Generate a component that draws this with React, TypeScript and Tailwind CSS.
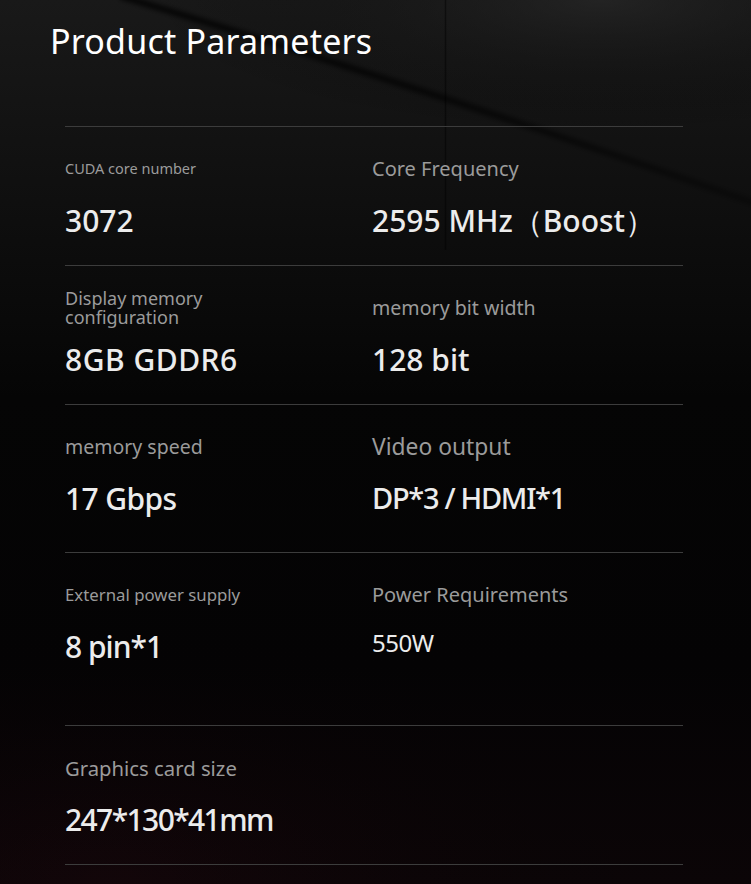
import React from "react";

type Cell = { label: string; value: string; labelCls: string; valueCls: string };

const rows: { h: string; cells: Cell[] }[] = [
  {
    h: "h-[139px]",
    cells: [
      { label: "CUDA core number", value: "3072", labelCls: "text-[14.5px]", valueCls: "text-[30px]" },
      { label: "Core Frequency", value: "2595 MHz（Boost）", labelCls: "text-[20px]", valueCls: "text-[30px]" },
    ],
  },
  {
    h: "h-[139px]",
    cells: [
      { label: "Display memory configuration", value: "8GB GDDR6", labelCls: "text-[18px] leading-[19px] w-[160px]", valueCls: "text-[30px] tracking-[0.5px]" },
      { label: "memory bit width", value: "128 bit", labelCls: "text-[19.6px]", valueCls: "text-[30px]" },
    ],
  },
  {
    h: "h-[148px]",
    cells: [
      { label: "memory speed", value: "17 Gbps", labelCls: "text-[19.5px]", valueCls: "text-[30px] tracking-[-0.6px]" },
      { label: "Video output", value: "DP*3 / HDMI*1", labelCls: "text-[22.8px]", valueCls: "text-[29px] tracking-[-1.3px]" },
    ],
  },
  {
    h: "h-[173px]",
    cells: [
      { label: "External power supply", value: "8 pin*1", labelCls: "text-[16.8px]", valueCls: "text-[30px] tracking-[-1px]" },
      { label: "Power Requirements", value: "550W", labelCls: "text-[20px]", valueCls: "text-[24px] font-normal tracking-[-0.5px] -mt-[6px]" },
    ],
  },
  {
    h: "h-[139px]",
    cells: [
      { label: "Graphics card size", value: "247*130*41mm", labelCls: "text-[20.3px]", valueCls: "text-[30px] tracking-[-1.6px]" },
    ],
  },
];

export default function App() {
  return (
    <div
      className="relative w-[751px] h-[884px] overflow-hidden bg-[linear-gradient(180deg,#191919_0%,#0e0e0e_25%,#050505_45%,#040304_75%,#0b0507_100%)]"
      style={{ fontFamily: '"Noto Sans", "Open Sans", sans-serif' }}
    >
      <svg className="absolute inset-0 pointer-events-none" width="751" height="884" viewBox="0 0 751 884">
        <defs>
          <radialGradient id="glow" cx="0.8" cy="0" r="0.6">
            <stop offset="0" stopColor="#2a2a2a" stopOpacity="0.6" />
            <stop offset="1" stopColor="#000" stopOpacity="0" />
          </radialGradient>
          <linearGradient id="streakFade" x1="0" y1="0" x2="1" y2="0">
            <stop offset="0" stopColor="#000" stopOpacity="0.85" />
            <stop offset="0.5" stopColor="#000" stopOpacity="0.7" />
            <stop offset="1" stopColor="#000" stopOpacity="0.35" />
          </linearGradient>
          <filter id="blur" x="-10%" y="-50%" width="120%" height="200%">
            <feGaussianBlur stdDeviation="2.5" />
          </filter>
          <radialGradient id="red" cx="0.15" cy="1" r="0.8">
            <stop offset="0" stopColor="#24080f" stopOpacity="0.3" />
            <stop offset="1" stopColor="#000" stopOpacity="0" />
          </radialGradient>
        </defs>
        <rect x="0" y="0" width="751" height="220" fill="url(#glow)" />
        <rect x="0" y="520" width="751" height="364" fill="url(#red)" />
        <path
          d="M120 -4 Q 400 80 760 205"
          fill="none"
          stroke="url(#streakFade)"
          strokeWidth="6"
          filter="url(#blur)"
        />
        <line x1="445.5" y1="0" x2="445.5" y2="250" stroke="#000" strokeOpacity="0.45" strokeWidth="1.5" />
      </svg>

      <div className="relative flex flex-col">
        <h1 className="pl-[50px] pt-[19px] text-[34px] leading-[44px] font-normal text-white tracking-[0.2px]">
          Product Parameters
        </h1>
        <div className="mt-[63px] mx-[65px] w-[618px] flex flex-col">
          {rows.map((r, i) => (
            <div key={i} className={`${r.h} border-t border-[#3c3c3c] grid grid-cols-[307px_1fr]`}>
              {r.cells.map((c, j) => (
                <div key={j} className="flex flex-col">
                  <div className="mt-[17px] h-[50px] flex items-center">
                    <span className={`text-[#9b9b9b] ${c.labelCls}`}>{c.label}</span>
                  </div>
                  <div className="mt-[1px] h-[50px] flex items-center">
                    <span className={`text-[#ececec] font-medium ${c.valueCls}`}>{c.value}</span>
                  </div>
                </div>
              ))}
            </div>
          ))}
          <div className="border-t border-[#3c3c3c]" />
        </div>
      </div>
    </div>
  );
}
